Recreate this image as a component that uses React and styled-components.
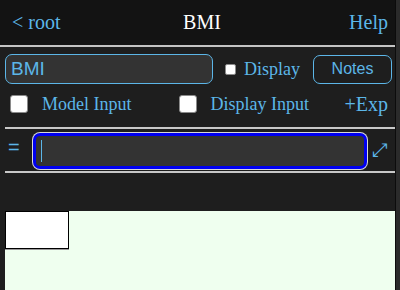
import React from "react";
import styled, { createGlobalStyle } from "styled-components";

const accent = "#5cb6e8";

const GlobalStyle = createGlobalStyle`
  html, body {
    margin: 0;
    padding: 0;
    background: #1e1e1e;
    overflow: hidden;
  }
`;

const Frame = styled.div`
  display: flex;
  width: 400px;
  height: 290px;
`;

const Main = styled.div`
  width: 395px;
  display: flex;
  flex-direction: column;
  background: #1e1e1e;
`;

const ScrollTrack = styled.div`
  width: 4px;
  border-left: 1px solid #0c0c0c;
  background: #2b2b2b;
`;

const Header = styled.div`
  height: 45px;
  flex-shrink: 0;
  display: flex;
  align-items: center;
  justify-content: space-between;
  padding: 0 7px 0 12px;
  background: #131313;
  border-bottom: 2px solid #c4c4c4;
  font-family: "Liberation Serif", serif;
  font-size: 20px;
`;

const HeaderLink = styled.span`
  color: ${accent};
  width: 60px;
  text-align: ${({ $right }) => ($right ? "right" : "left")};
`;

const Title = styled.span`
  color: #fff;
  margin-left: 4px;
`;

const Body = styled.div`
  display: flex;
  flex-direction: column;
  padding-left: 5px;
  flex: 1;
`;

const Row = styled.div`
  display: flex;
  align-items: center;
  margin-top: ${({ $top }) => $top || 0}px;
  height: ${({ $h }) => $h}px;
`;

const NameField = styled.div`
  box-sizing: border-box;
  width: 208px;
  height: 30px;
  display: flex;
  align-items: center;
  padding: 0 5px;
  background: #333;
  border: 1px solid ${accent};
  border-radius: 7px;
  color: ${accent};
  font-family: "Liberation Sans", Arial, sans-serif;
  font-size: 19px;
`;

const SmallBox = styled.span`
  box-sizing: border-box;
  width: 11px;
  height: 11px;
  margin: 1px 8px 0 12px;
  background: #fff;
  border: 1px solid #8a8a8a;
  border-radius: 2px;
`;

const BigBox = styled.span`
  box-sizing: border-box;
  width: 18px;
  height: 18px;
  margin-left: ${({ $left }) => $left}px;
  background: #fff;
  border: 1px solid #8a8a8a;
  border-radius: 3px;
`;

const Label = styled.span`
  color: ${accent};
  font-family: "Liberation Serif", serif;
  font-size: ${({ $size }) => $size || 18}px;
  margin-left: ${({ $left }) => $left || 0}px;
  margin-right: ${({ $right }) => $right || 0}px;
`;

const NotesButton = styled.div`
  box-sizing: border-box;
  width: 79px;
  height: 29px;
  margin-left: 13px;
  display: flex;
  align-items: center;
  justify-content: center;
  border: 1px solid ${accent};
  border-radius: 7px;
  color: ${accent};
  font-family: "Liberation Sans", Arial, sans-serif;
  font-size: 16px;
`;

const Push = styled.span`
  flex: 1;
`;

const Divider = styled.div`
  height: 2px;
  background: #c8c8c8;
  margin-top: ${({ $top }) => $top}px;
`;

const Equals = styled.span`
  color: ${accent};
  font-family: "Liberation Sans", Arial, sans-serif;
  font-size: 20px;
  width: 28px;
  padding-left: 3px;
  box-sizing: border-box;
  line-height: 1;
  margin-top: -8px;
`;

const ExprField = styled.div`
  box-sizing: border-box;
  width: 334px;
  height: 36px;
  display: flex;
  align-items: center;
  padding-left: 5px;
  background: #333;
  border: 3px solid #0000f0;
  border-radius: 7px;
  box-shadow: 0 0 0 1px #d8d8d8;
`;

const Caret = styled.span`
  width: 1px;
  height: 22px;
  background: ${accent};
`;

const Expand = styled.span`
  color: ${accent};
  font-family: "DejaVu Sans", sans-serif;
  font-size: 19px;
  margin: -4px 0 0 5px;
`;

const Canvas = styled.div`
  flex: 1;
  margin-top: 38px;
  background: #efffef;
`;

const Tile = styled.div`
  width: 62px;
  height: 36px;
  background: #fff;
  border: 1px solid #000;
  box-shadow: 0 1px 0 #999;
`;

export default function App() {
  return (
    <>
      <GlobalStyle />
      <Frame>
        <Main>
          <Header>
            <HeaderLink>&lt; root</HeaderLink>
            <Title>BMI</Title>
            <HeaderLink $right>Help</HeaderLink>
          </Header>
          <Body>
            <Row $top={7} $h={30}>
              <NameField>BMI</NameField>
              <SmallBox />
              <Label>Display</Label>
              <NotesButton>Notes</NotesButton>
            </Row>
            <Row $top={11} $h={18}>
              <BigBox $left={5} />
              <Label $left={14}>Model Input</Label>
              <BigBox $left={47} />
              <Label $left={14}>Display Input</Label>
              <Push />
              <Label $size={20} $right={7}>+Exp</Label>
            </Row>
            <Divider $top={14} />
            <Row $top={4} $h={36}>
              <Equals>=</Equals>
              <ExprField>
                <Caret />
              </ExprField>
              <Expand>⤢</Expand>
            </Row>
            <Divider $top={2} />
            <Canvas>
              <Tile />
            </Canvas>
          </Body>
        </Main>
        <ScrollTrack />
      </Frame>
    </>
  );
}
